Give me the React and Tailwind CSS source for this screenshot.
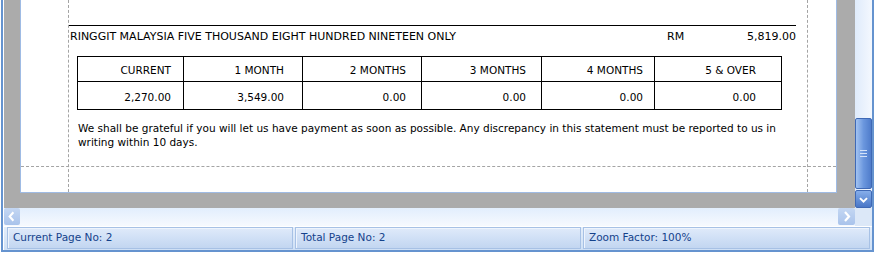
import React from "react";

const font = { fontFamily: '"DejaVu Sans", Verdana, sans-serif' };

const cols = [
  { w: "w-[106px]", pr: "pr-[12px]", head: "CURRENT", val: "2,270.00" },
  { w: "w-[119px]", pr: "pr-[18px]", head: "1 MONTH", val: "3,549.00" },
  { w: "w-[119px]", pr: "pr-[15px]", head: "2 MONTHS", val: "0.00" },
  { w: "w-[120px]", pr: "pr-[15px]", head: "3 MONTHS", val: "0.00" },
  { w: "w-[113px]", pr: "pr-[11px]", head: "4 MONTHS", val: "0.00" },
  { w: "w-[127px]", pr: "pr-[25px]", head: "5 & OVER", val: "0.00" },
];

const Chevron = ({ dir }) => {
  const d = {
    left: "M10 4 L6 8.5 L10 13",
    right: "M7 4 L11 8.5 L7 13",
    down: "M4.5 7 L8.5 11 L12.5 7",
  }[dir];
  return (
    <svg width="17" height="17" viewBox="0 0 17 17">
      <path d={d} fill="none" stroke="white" strokeWidth="2.2" />
    </svg>
  );
};

const StatusPanel = ({ w, children }) => (
  <div className={`${w} h-[22px] border border-[#a7c1e5] bg-gradient-to-b from-[#dfeafa] to-[#c2d6f1] flex items-center pl-[5px] text-[10.5px] text-[#15428b] shadow-[inset_1px_1px_0_#eef4fd]`}>
    {children}
  </div>
);

export default function App() {
  return (
    <div className="w-[876px] h-[254px] bg-white overflow-hidden pl-[1px] pr-[2px]" style={font}>
      <div className="h-[252px] border-l-2 border-r-2 border-b-2 border-[#6593cf] bg-white pl-[1px] flex flex-col">
        {/* preview */}
        <div className="h-[208px] flex">
          <div className="w-[851px] h-full bg-[#ababab] pl-[16px]">
            <div className="relative w-[817px] h-[193px] bg-white border-l border-r border-b border-[#9fbbe4] text-black">
              {/* margin guides */}
              <div className="absolute left-[47px] top-0 h-full border-l border-dashed border-[#a4a4a4]" />
              <div className="absolute left-[786px] top-0 h-full border-l border-dashed border-[#a4a4a4]" />
              <div className="absolute left-0 top-[166px] w-full border-t border-dashed border-[#a4a4a4]" />

              <div className="pt-[25px]">
                <div className="ml-[47px] w-[728px] border-t border-black" />
                <div className="ml-[49px] w-[726px] mt-[4px] h-[14px] flex items-center text-[11px] leading-[14px]">
                  <span className="w-[597px] whitespace-nowrap">RINGGIT MALAYSIA FIVE THOUSAND EIGHT HUNDRED NINETEEN ONLY</span>
                  <span>RM</span>
                  <span className="ml-auto">5,819.00</span>
                </div>

                <div className="ml-[56px] mt-[12px] w-[705px] border-l border-t border-black flex flex-col text-[10.5px]">
                  <div className="flex">
                    {cols.map((c) => (
                      <div key={c.head} className={`${c.w} ${c.pr} h-[25px] border-r border-b border-black flex items-center justify-end pt-[3px]`}>
                        {c.head}
                      </div>
                    ))}
                  </div>
                  <div className="flex">
                    {cols.map((c) => (
                      <div key={c.head} className={`${c.w} ${c.pr} h-[28px] border-r border-b border-black flex items-center justify-end pt-[4px]`}>
                        {c.val}
                      </div>
                    ))}
                  </div>
                </div>

                <p className="ml-[57px] mt-[11px] text-[10.5px] leading-[14px] whitespace-nowrap">
                  We shall be grateful if you will let us have payment as soon as possible. Any discrepancy in this statement must be reported to us in
                  <br />
                  writing within 10 days.
                </p>
              </div>
            </div>
          </div>

          {/* vertical scrollbar */}
          <div className="w-[17px] h-full bg-gradient-to-r from-[#dfebfb] to-[#f4f8fe] flex flex-col">
            <div className="h-[118px]" />
            <div className="h-[71px] rounded-[2px] border border-[#3f69b5] bg-gradient-to-r from-[#a3c3f1] via-[#6b97de] to-[#4f7ccb] flex items-center justify-center">
              <div className="flex flex-col gap-[2px]">
                <div className="w-[7px] h-[1px] bg-[#d5e3f8]" />
                <div className="w-[7px] h-[1px] bg-[#d5e3f8]" />
                <div className="w-[7px] h-[1px] bg-[#d5e3f8]" />
              </div>
            </div>
            <div className="mt-[1px] h-[18px] rounded-[2px] border border-[#3f69b5] bg-gradient-to-b from-[#86aeea] to-[#4a77c7] flex items-center justify-center">
              <Chevron dir="down" />
            </div>
          </div>
        </div>

        {/* horizontal scrollbar */}
        <div className="h-[18px] flex">
          <div className="w-[851px] flex bg-gradient-to-b from-[#e2eefd] to-[#f6f9fe]">
            <div className="w-[16px] h-[17px] rounded-[2px] bg-gradient-to-b from-[#c4d7f3] to-[#a9c3eb] flex items-center justify-center">
              <Chevron dir="left" />
            </div>
            <div className="flex-1" />
            <div className="w-[17px] h-[17px] rounded-[2px] bg-gradient-to-b from-[#c4d7f3] to-[#a9c3eb] flex items-center justify-center">
              <Chevron dir="right" />
            </div>
          </div>
          <div className="w-[17px] bg-[#dce8f8]" />
        </div>

        {/* status bar */}
        <div className="h-[24px] bg-gradient-to-b from-[#e4eefb] to-[#cfe0f5] border-t border-white flex items-start pl-[3px] gap-[2px]">
          <StatusPanel w="w-[286px]">Current Page No: 2</StatusPanel>
          <StatusPanel w="w-[286px]">Total Page No: 2</StatusPanel>
          <StatusPanel w="w-[287px]">Zoom Factor: 100%</StatusPanel>
        </div>
      </div>
    </div>
  );
}
